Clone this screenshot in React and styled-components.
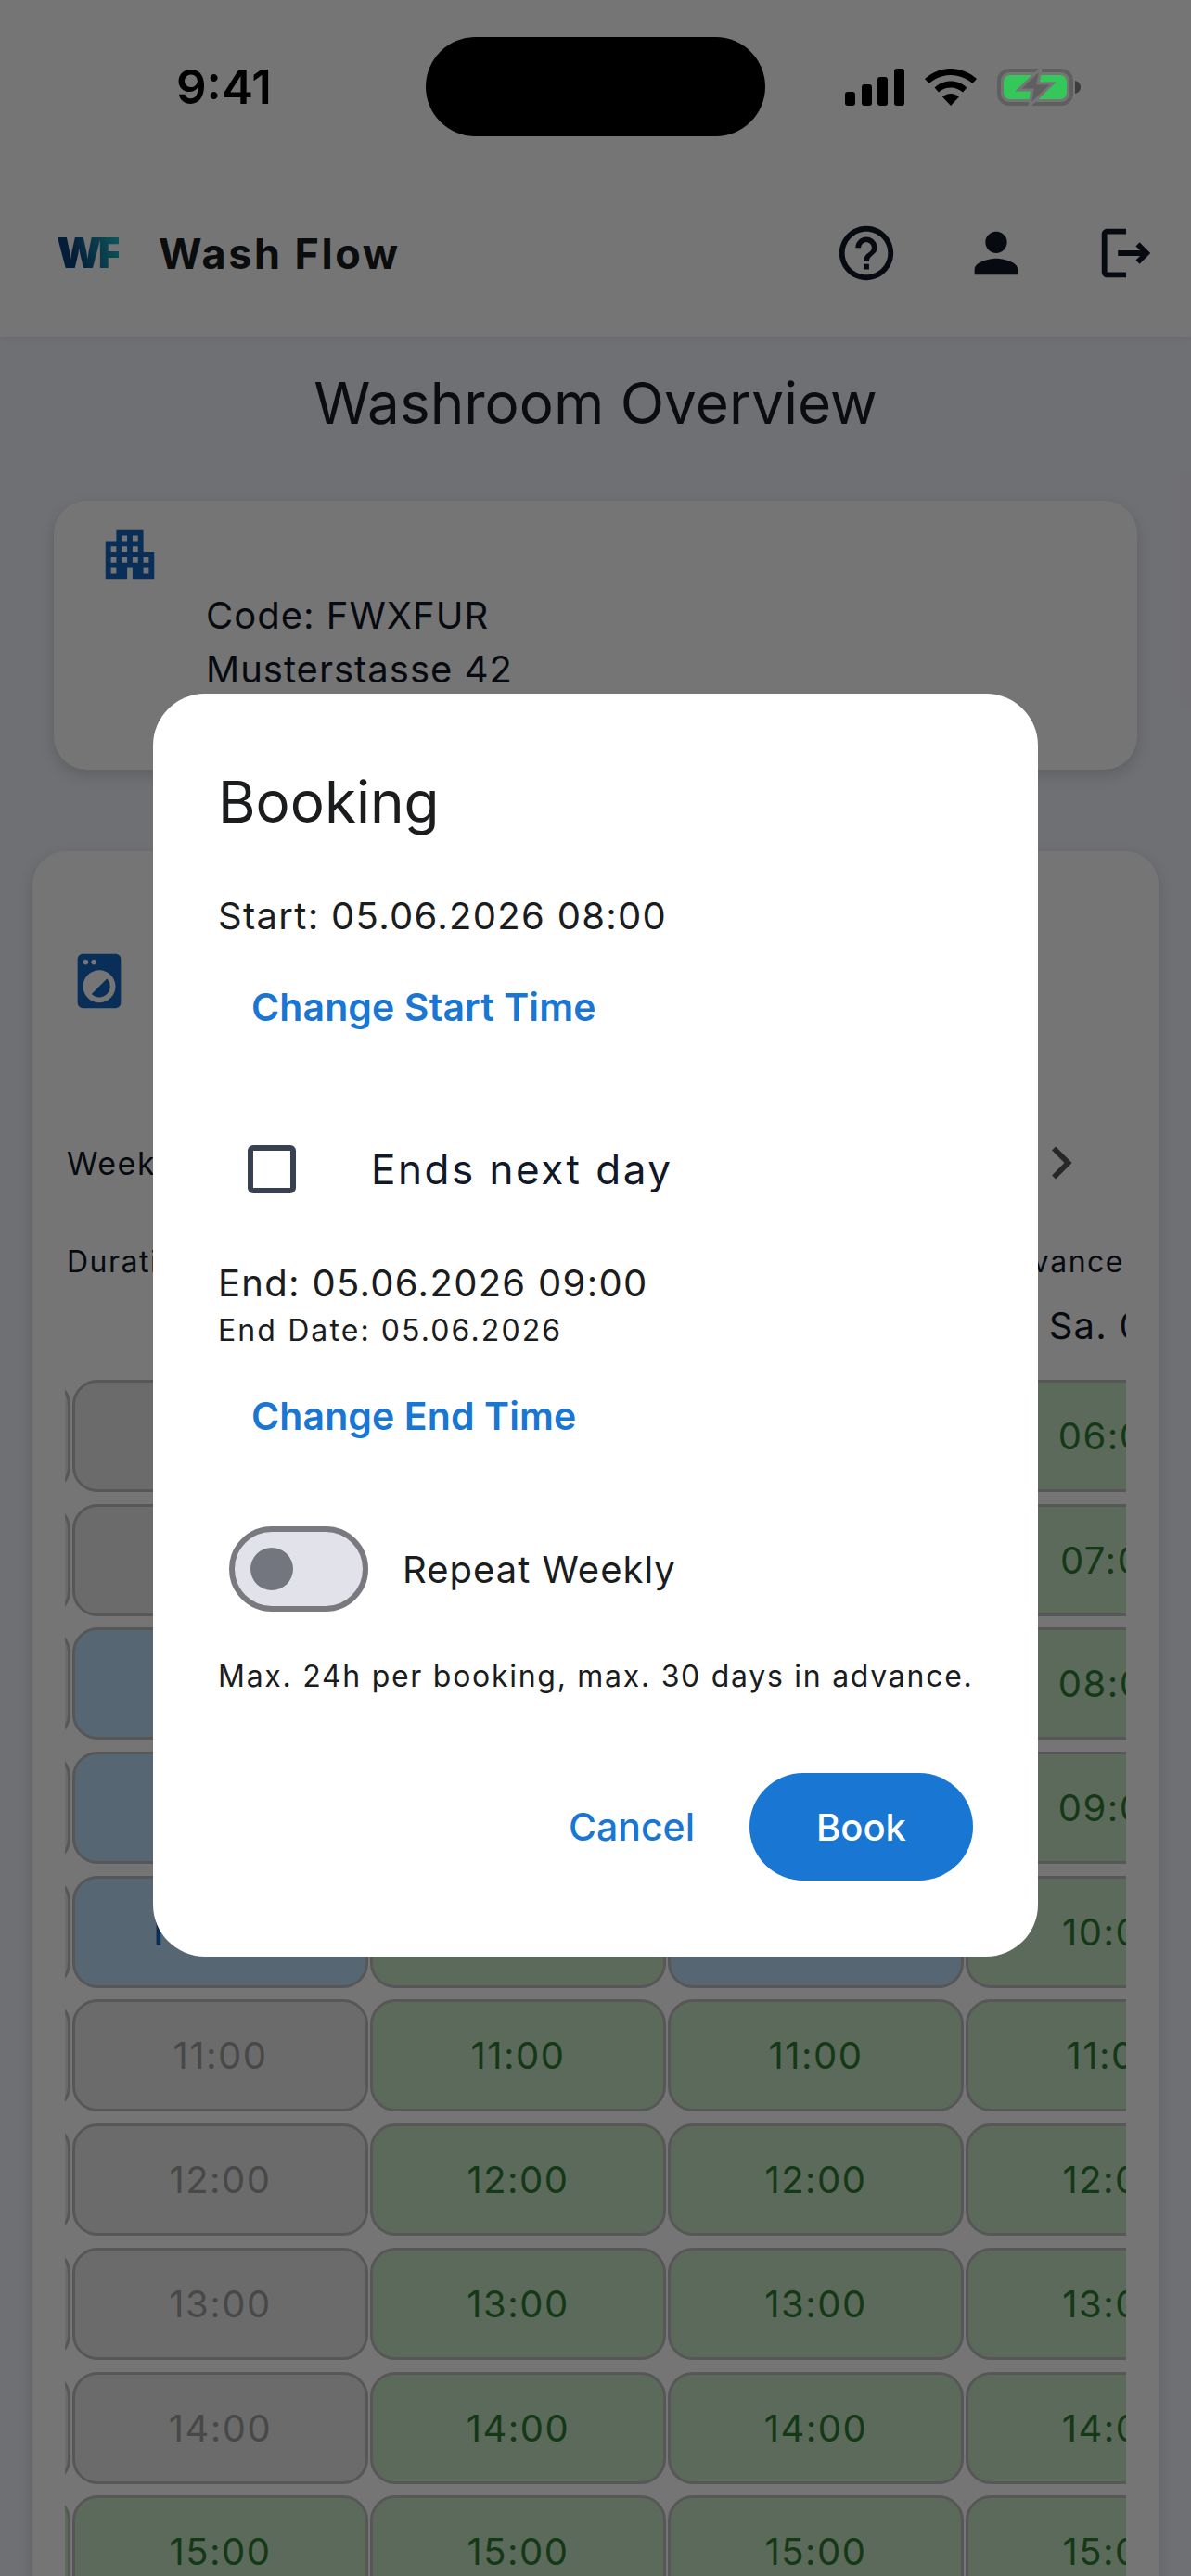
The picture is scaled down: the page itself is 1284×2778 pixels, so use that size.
import styled, { createGlobalStyle } from "styled-components";
import {
  MdHelpOutline,
  MdPerson,
  MdOutlineLogout,
  MdApartment,
  MdLocalLaundryService,
  MdChevronRight,
} from "react-icons/md";

const GlobalStyle = createGlobalStyle`
  html, body {
    margin: 0;
    padding: 0;
    background: #f1f3fa;
  }
  * {
    box-sizing: border-box;
  }
`;

const FONT = `Inter, "Liberation Sans", sans-serif`;

const hours = ["06", "07", "08", "09", "10", "11", "12", "13", "14", "15", "16"];
const days = ["Di. 02.", "Mi. 03.", "Do. 04.", "Fr. 05.", "Sa. 06."];

// which slot is what, per day column (anything not listed is free)
const slotState = (day, hour) => {
  if (day === 0) return hour < 9 ? "past" : "free";
  if (day === 1) {
    if (hour === 2 || hour === 3 || hour === 4) return "booked";
    return hour < 9 ? "past" : "free";
  }
  if (day === 3 && hour === 4) return "booked";
  return "free";
};

function BatteryIcon() {
  return (
    <svg width="90" height="40" viewBox="0 0 90 40">
      <rect x="2" y="2" width="78" height="36" rx="11" fill="none" stroke="#5f5f5f" strokeWidth="4" />
      <rect x="7" y="7" width="68" height="26" rx="7" fill="#34c759" />
      <path d="M84 13c4 1 6 4 6 7s-2 6-6 7z" fill="#3d3d3d" />
      <path
        d="M47 0 L23 23 H38 L35 40 L60 16 H44 Z"
        fill="#5f5f5f"
        stroke="#757575"
        strokeWidth="3"
      />
    </svg>
  );
}

function App() {
  return (
    <>
      <GlobalStyle />
      <Page>
        <Header>
          <Brand>
            <Logo>WF</Logo>
            <AppName>Wash Flow</AppName>
          </Brand>
          <HeaderIcons>
            <MdHelpOutline size={70} />
            <MdPerson size={70} />
            <MdOutlineLogout size={70} />
          </HeaderIcons>
        </Header>

        <PageTitle>Washroom Overview</PageTitle>

        <AddressCard>
          <IconLine>
            <MdApartment size={70} color="#1565c0" />
          </IconLine>
          <AddressText>
            <div>Code: FWXFUR</div>
            <div>Musterstasse 42</div>
          </AddressText>
        </AddressCard>

        <MachineCard>
          <MdLocalLaundryService size={70} color="#1565c0" />
          <WeekRow>
            <WeekLabel>Week 23</WeekLabel>
            <MdChevronRight size={70} color="#555555" />
          </WeekRow>
          <RulesRow>
            <span>Duration: 1h</span>
            <span>Max. 30 days in advance</span>
          </RulesRow>
          <TableClip>
            <DayGrid>
              {days.map((d) => (
                <DayLabel key={d}>{d}</DayLabel>
              ))}
            </DayGrid>
            <SlotGrid>
              {hours.map((h, hour) =>
                days.map((d, day) => {
                  const state = slotState(day, hour);
                  return (
                    <Slot key={d + h} $state={state}>
                      {state === "booked" ? "Nadine" : `${h}:00`}
                    </Slot>
                  );
                }),
              )}
            </SlotGrid>
          </TableClip>
        </MachineCard>

        <Scrim>
          <Modal>
            <ModalTitle>Booking</ModalTitle>
            <StartLine>Start: 05.06.2026 08:00</StartLine>
            <ChangeStart>Change Start Time</ChangeStart>
            <CheckRow>
              <CheckBox />
              <CheckLabel>Ends next day</CheckLabel>
            </CheckRow>
            <EndLine>End: 05.06.2026 09:00</EndLine>
            <EndDate>End Date: 05.06.2026</EndDate>
            <ChangeEnd>Change End Time</ChangeEnd>
            <RepeatRow>
              <Toggle>
                <Knob />
              </Toggle>
              <RepeatLabel>Repeat Weekly</RepeatLabel>
            </RepeatRow>
            <Limits>Max. 24h per booking, max. 30 days in advance.</Limits>
            <Actions>
              <CancelButton>Cancel</CancelButton>
              <BookButton>Book</BookButton>
            </Actions>
          </Modal>
        </Scrim>

        <StatusBar>
          <Clock>9:41</Clock>
          <Island />
          <StatusIcons>
            <svg width="64" height="40" viewBox="0 0 64 40" fill="#000">
              <rect x="0" y="25" width="11" height="15" rx="3" />
              <rect x="18" y="17" width="11" height="23" rx="3" />
              <rect x="35" y="9" width="11" height="31" rx="3" />
              <rect x="53" y="0" width="11" height="40" rx="3" />
            </svg>
            <svg width="56" height="40" viewBox="0 0 56 40" fill="#000">
              <path d="M28 0c10.500 0 20 4 28 11l-4.500 5C45 10.500 37 7 28 7S11 10.500 4.500 16L0 11C8 4 17.500 0 28 0z" />
              <path d="M28 13.500c6.500 0 12.500 2.500 17.500 7L41 25.500c-3.500-3-8-5-13-5s-9.500 2-13 5l-4.500-5c5-4.500 11-7 17.500-7z" />
              <path d="M28 27c3.500 0 6.500 1.300 9 3.500L28 40l-9-9.500c2.500-2.200 5.500-3.500 9-3.500z" />
            </svg>
            <BatteryIcon />
          </StatusIcons>
        </StatusBar>
      </Page>
    </>
  );
}

export default App;

const Page = styled.div`
  position: relative;
  height: 100vh;
  overflow: hidden;
  background: #f1f3fa;
  font-family: ${FONT};
  color: #111827;
`;

const Header = styled.header`
  height: 363px;
  padding: 183px 35px 0 61px;
  display: flex;
  align-items: center;
  justify-content: space-between;
  background: #ffffff;
  box-shadow: 0 2px 6px rgba(0, 0, 0, 0.06);
`;

const Brand = styled.div`
  display: flex;
  align-items: center;
  gap: 43px;
`;

const Logo = styled.span`
  font-size: 45px;
  font-weight: 900;
  letter-spacing: -4px;
  line-height: 50px;
  background: linear-gradient(70deg, #0a3f7c 30%, #22c0cc 100%);
  -webkit-background-clip: text;
  background-clip: text;
  color: transparent;
`;

const AppName = styled.span`
  font-size: 45px;
  font-weight: 700;
  letter-spacing: 2.5px;
  color: #1a1c1e;
`;

const HeaderIcons = styled.div`
  display: flex;
  gap: 70px;
  color: #111827;

  svg {
    display: block;
  }
`;

const PageTitle = styled.h1`
  margin: 36px 0 69px;
  font-size: 62px;
  line-height: 72px;
  font-weight: 400;
  text-align: center;
  color: #1a1c1e;
`;

const AddressCard = styled.section`
  margin: 0 58px;
  height: 290px;
  padding: 23px 47px;
  background: #ffffff;
  border-radius: 36px;
  box-shadow: 0 6px 16px rgba(0, 0, 0, 0.14);
`;

const IconLine = styled.div`
  height: 72px;
`;

const AddressText = styled.div`
  margin-left: 117px;
  font-size: 40px;
  line-height: 58px;
  letter-spacing: 1px;
`;

const MachineCard = styled.section`
  margin: 88px 35px 0;
  padding: 105px 35px 0;
  background: #ffffff;
  border-radius: 36px;
  box-shadow: 0 6px 16px rgba(0, 0, 0, 0.14);

  > svg {
    display: block;
    margin-left: 2px;
  }
`;

const WeekRow = styled.div`
  margin-top: 126px;
  padding: 0 35px 0 2px;
  display: flex;
  align-items: center;
  justify-content: space-between;
`;

const WeekLabel = styled.span`
  font-size: 34px;
  letter-spacing: 1.5px;
`;

const RulesRow = styled.div`
  margin-top: 52px;
  padding: 0 2px;
  display: flex;
  justify-content: space-between;
  font-size: 32px;
  line-height: 40px;
  letter-spacing: 1.5px;
`;

const TableClip = styled.div`
  margin-top: 25px;
  overflow: hidden;
`;

const DayGrid = styled.div`
  margin-left: -313px;
  display: grid;
  grid-template-columns: repeat(5, 319px);
  column-gap: 2px;
`;

const SlotGrid = styled(DayGrid)`
  margin-top: 34px;
  grid-auto-rows: 121px;
  row-gap: 12.7px;
`;

const DayLabel = styled.div`
  font-size: 40px;
  line-height: 48px;
  letter-spacing: 1.2px;
  text-align: center;
`;

const slotColors = {
  past: "background: #eaeaea; color: #9e9e9e;",
  free: "background: #c8e6c9; color: #2e7d32;",
  booked: "background: #bbdefb; color: #1565c0; font-weight: 500;",
};

const Slot = styled.div`
  display: flex;
  align-items: center;
  justify-content: center;
  border: 3px solid #bdbdbd;
  border-radius: 27px;
  font-size: 40px;
  letter-spacing: 1.5px;
  ${(p) => slotColors[p.$state]}
`;

const Scrim = styled.div`
  position: absolute;
  inset: 0;
  padding-top: 80px;
  display: flex;
  align-items: center;
  justify-content: center;
  background: rgba(0, 0, 0, 0.54);
`;

const Modal = styled.div`
  width: 954px;
  padding: 79px 70px 82px 70px;
  background: #ffffff;
  border-radius: 56px;
  color: #1a1c1e;
`;

const ModalTitle = styled.h2`
  margin: 0;
  font-size: 62px;
  line-height: 76px;
  font-weight: 400;
`;

const StartLine = styled.div`
  margin-top: 61px;
  font-size: 40px;
  line-height: 48px;
  letter-spacing: 1.3px;
`;

const EndLine = styled(StartLine)`
  margin-top: 72px;
`;

const EndDate = styled.div`
  margin-top: 7px;
  font-size: 32px;
  line-height: 40px;
  font-weight: 400;
  letter-spacing: 2.1px;
`;

const ChangeStart = styled.div`
  margin: 49px 0 0 36px;
  font-size: 41px;
  line-height: 50px;
  font-weight: 600;
  letter-spacing: 0.1px;
  color: #1976d2;
`;

const ChangeEnd = styled(ChangeStart)`
  margin-top: 47px;
`;

const CheckRow = styled.div`
  margin: 123px 0 0 32px;
  display: flex;
  align-items: center;
  gap: 81px;
`;

const CheckBox = styled.div`
  width: 52px;
  height: 52px;
  border: 6px solid #374151;
  border-radius: 6px;
`;

const CheckLabel = styled.span`
  font-size: 44px;
  letter-spacing: 2.5px;
  color: #111827;
`;

const RepeatRow = styled.div`
  margin: 94px 0 0 12px;
  display: flex;
  align-items: center;
  gap: 37px;
`;

const Toggle = styled.div`
  width: 150px;
  height: 92px;
  padding-left: 17px;
  display: flex;
  align-items: center;
  background: #e2e2ea;
  border: 6px solid #79797f;
  border-radius: 46px;
`;

const Knob = styled.div`
  width: 46px;
  height: 46px;
  border-radius: 50%;
  background: #74767f;
`;

const RepeatLabel = styled.span`
  font-size: 40px;
  letter-spacing: 1px;
`;

const Limits = styled.div`
  margin-top: 50px;
  font-size: 32px;
  line-height: 40px;
  letter-spacing: 1.72px;
  white-space: nowrap;
`;

const Actions = styled.div`
  margin-top: 84px;
  display: flex;
  align-items: center;
  justify-content: flex-end;
  gap: 59px;
`;

const CancelButton = styled.span`
  font-size: 41px;
  font-weight: 500;
  color: #1976d2;
`;

const BookButton = styled.span`
  width: 241px;
  height: 116px;
  display: flex;
  align-items: center;
  justify-content: center;
  border-radius: 58px;
  background: #1976d2;
  color: #ffffff;
  font-size: 40px;
  font-weight: 500;
`;

const StatusBar = styled.div`
  position: absolute;
  top: 40px;
  left: 0;
  right: 0;
  height: 107px;
  padding: 0 119px 0 190px;
  display: flex;
  align-items: center;
`;

const Clock = styled.span`
  width: 269px;
  font-size: 51px;
  font-weight: 600;
  color: #000000;
`;

const Island = styled.div`
  width: 366px;
  height: 107px;
  border-radius: 54px;
  background: #000000;
`;

const StatusIcons = styled.div`
  margin-left: auto;
  display: flex;
  align-items: center;
  gap: 22px;

  svg {
    display: block;
  }
`;
